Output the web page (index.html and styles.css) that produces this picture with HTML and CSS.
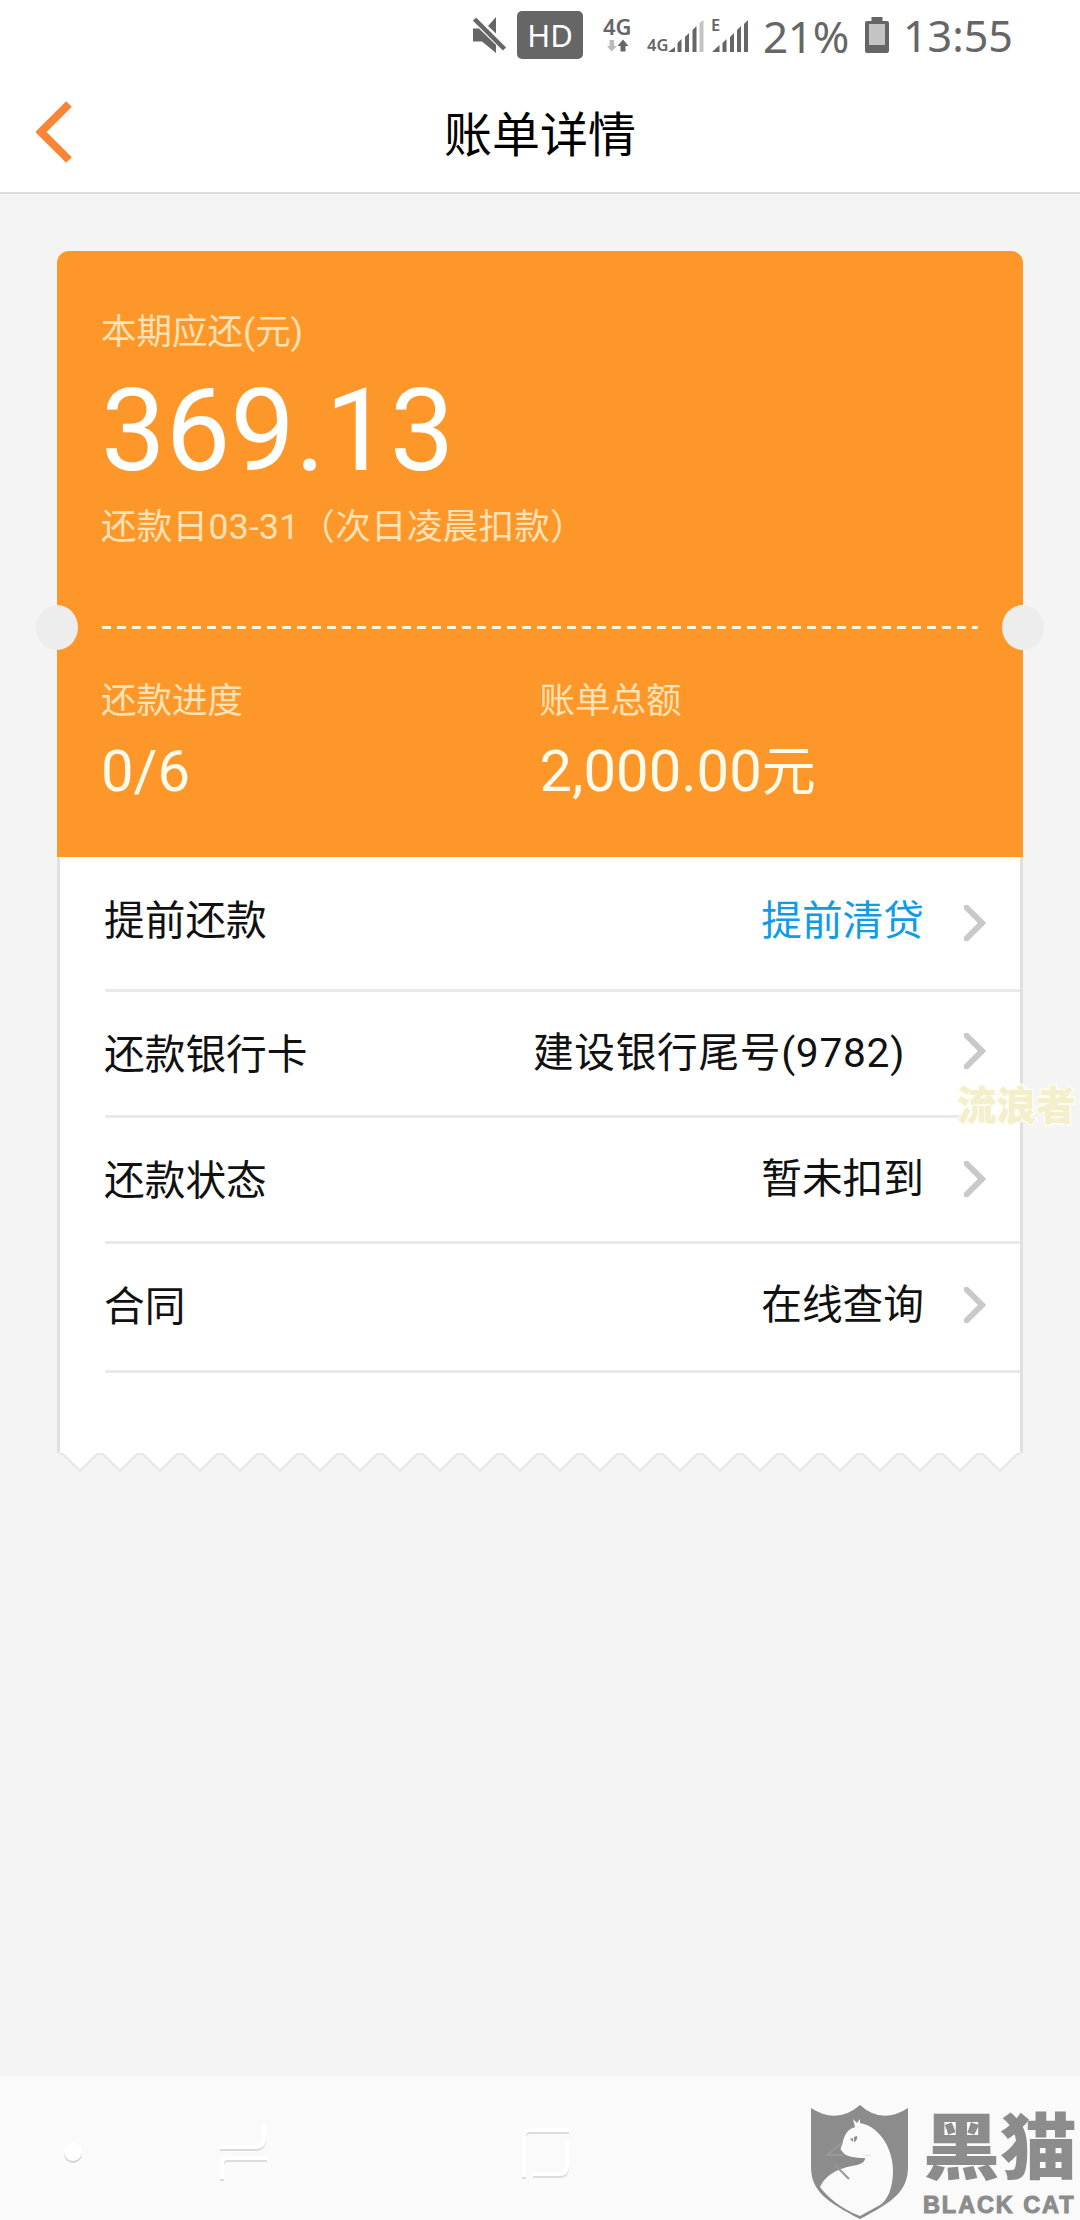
FILE: index.html
```html
<!DOCTYPE html>
<html lang="zh-CN">
<head>
<meta charset="utf-8">
<title>账单详情</title>
<link rel="stylesheet" href="styles.css">
</head>
<body>
<div class="status">
  <svg class="mute" width="34" height="38" viewBox="0 0 34 38"><path d="M15 10L23 1V17.500zM0 12.500H6L23 29V37L9 25.500H0z" fill="#666"/><path d="M1.500 3L31.500 33" stroke="#666" stroke-width="4.500"/></svg>
  <span class="hd">HD</span>
  <div class="net"><span class="net-label">4G</span>
    <svg width="22" height="13" viewBox="5 26 22 13"><path d="M7.500 27h4.500v6h3l-5.500 5.500L5 33h2.500z" fill="#bbb"/><path d="M18.500 38.500v-5.500h-3l5.500-6.500 5.500 6.500h-3v5.500z" fill="#666"/></svg>
  </div>
  <span class="sig-label sim1">4G</span>
  <svg class="sig" width="36" height="36" viewBox="21 0 36 36"><path d="M21 34l7-5v5zM30.500 34V25l4-4v13zM38 34V19l4-4v19zM45.500 34V12l4-4v26z" fill="#666"/><path d="M52.500 34V5l4-3v32z" fill="#c4c4c4"/></svg>
  <span class="sig-label sim2">E</span>
  <svg class="edge" width="37" height="36" viewBox="0 0 37 36"><path d="M0 34l7.500-7v7zM10.500 34V25l4-4v13zM18 34V19l4-4v19zM25 34V12l4-4v26zM32 34V6l4-4v32z" fill="#666"/></svg>
  <span class="pct">21%</span>
  <svg class="bat" width="24" height="36" viewBox="0 0 24 36"><path d="M6.500 0h11v4H22a2 2 0 0 1 2 2v28a2 2 0 0 1-2 2H2a2 2 0 0 1-2-2V6a2 2 0 0 1 2-2h4.500z" fill="#666"/><path d="M4 7h16v21H4z" fill="#c4c4c4"/></svg>
  <span class="clock">13:55</span>
</div>
<header class="bar">
  <svg class="back" width="38" height="62" viewBox="0 0 38 62"><path d="M33 3L5 31L33 59" fill="none" stroke="#fa8536" stroke-width="8"/></svg>
  <h1 class="title">账单详情</h1>
</header>
<main class="content">
  <section class="card">
    <div class="summary">
      <p class="label">本期应还(元)</p>
      <p class="amount">369.13</p>
      <p class="label due">还款日03-31（次日凌晨扣款）</p>
      <div class="tear"></div>
      <div class="stats">
        <div class="stat"><p class="label">还款进度</p><p class="value">0/6</p></div>
        <div class="stat"><p class="label">账单总额</p><p class="value">2,000.00<span class="unit">元</span></p></div>
      </div>
    </div>
    <div class="rows">
      <div class="row first"><span class="name">提前还款</span><span class="info link">提前清贷</span><svg class="chev" width="22" height="36" viewBox="0 0 22 36"><path d="M2.500 2.500L18 18L2.500 33.500"/></svg></div>
      <div class="row"><span class="name">还款银行卡</span><span class="info bank">建设银行尾号(9782)</span><svg class="chev bank-chev" width="22" height="36" viewBox="0 0 22 36"><path d="M2.500 2.500L18 18L2.500 33.500"/></svg></div>
      <div class="row"><span class="name">还款状态</span><span class="info">暂未扣到</span><svg class="chev" width="22" height="36" viewBox="0 0 22 36"><path d="M2.500 2.500L18 18L2.500 33.500"/></svg></div>
      <div class="row last"><span class="name">合同</span><span class="info">在线查询</span><svg class="chev" width="22" height="36" viewBox="0 0 22 36"><path d="M2.500 2.500L18 18L2.500 33.500"/></svg></div>
    </div>
    <svg class="zigzag" width="966" height="20" viewBox="0 0 966 20">
      <defs><pattern id="tooth" x="3" width="40" height="20" patternUnits="userSpaceOnUse"><path d="M0 0H40V1H37L20 18L3 1H0z" fill="#fff"/><path d="M0 1H3L20 18L37 1H40" fill="none" stroke="#e6e6e6" stroke-width="2"/></pattern></defs>
      <rect x="3" width="960" height="20" fill="url(#tooth)"/>
    </svg>
    <span class="nick">流浪者</span>
  </section>
</main>
<footer class="nav">
  <svg class="nav-icons" width="700" height="100" viewBox="0 0 700 100">
    <g transform="translate(0 2)" fill="none" stroke="#dcdcdc" stroke-width="4"><circle cx="73" cy="37" r="9" fill="#d2d2d2" stroke="none"/><path d="M264 10V22Q264 32 256 32H220M267 43H228Q222 43 222 49V64M569 15H530Q524 15 524 21V62M567 26V51Q567 59 559 59H533"/></g>
    <g fill="none" stroke="#fff" stroke-width="4"><circle cx="73" cy="37" r="9" fill="#fff" stroke="none"/><path d="M264 10V22Q264 32 256 32H220M267 43H228Q222 43 222 49V64M569 15H530Q524 15 524 21V62M567 26V51Q567 59 559 59H533"/></g>
  </svg>
  <div class="brand">
    <svg width="98" height="115" viewBox="0 0 98 115">
      <path d="M0 3Q26 20 49 0Q71 20 97 3V62C97 86 82 97 49 114C16 97 0 86 0 62Z" fill="#8c8c8c"/>
      <path d="M42 14L46 18L49 14V18C70 22 82 45 82 66C82 82 77 95 69 100L49 111C31 104 16 92 9 82C14 71 25 64 41 61C48 60 54 58 54 53C44 53 34 52 31 46C28 44 31 42 32 36C34 29 37 24 44 22Z" fill="#fafafa"/>
      <path d="M39 34l3-1v4zM43 32l3-1q1 4-3 6z" fill="#8c8c8c"/>
      <path d="M31 38L16 50H32M24 60L38 74" fill="none" stroke="#999" stroke-width="2"/>
      <path d="M54 50.500H60" stroke="#e4e4e4" stroke-width="1.500"/>
    </svg>
    <div class="brand-text"><span class="brand-cn">黑猫</span><span class="brand-en">BLACK CAT</span></div>
  </div>
</footer>
</body>
</html>
```

FILE: styles.css
```css
* { box-sizing: border-box; }
body { margin: 0; width: 1080px; height: 2220px; display: flex; flex-direction: column; overflow: hidden; background: #f4f4f4; color: #111; font-family: Roboto, "Noto Sans CJK SC", sans-serif; }
p, h1 { margin: 0; font-weight: 400; white-space: nowrap; }
svg { display: block; flex: none; }

.status { flex: none; height: 70px; display: flex; align-items: flex-start; padding-left: 473px; background: #fff; color: #666; font-family: "Noto Sans", sans-serif; white-space: nowrap; }
.mute { margin-top: 16px; }
.hd { width: 66px; height: 48px; margin: 11px 0 0 10px; border-radius: 5px; background: #666; color: #fff; font-size: 31px; line-height: 48px; text-align: center; }
.net { width: 34px; margin: 10px 0 0 20px; }
.net-label { display: block; font-size: 22px; line-height: 32px; height: 29px; font-weight: 600; }
.net svg { margin-left: 4px; }
.sig-label { font-size: 16.500px; line-height: 24px; font-weight: 600; }
.sim1 { width: 21px; margin: 33px 0 0 10px; }
.sig { margin: 18px 0 0; }
.sim2 { width: 10px; margin: 13px -10px 0 7px; }
.edge { margin: 18px 0 0 1px; }
.pct { margin-left: 14px; width: 91px; font-size: 44px; line-height: 72px; letter-spacing: -0.300px; }
.bat { margin: 17px 0 0 11px; }
.clock { margin-left: 14px; font-size: 43px; line-height: 72px; }

.bar { flex: none; height: 124px; display: flex; align-items: flex-start; background: #fff; border-bottom: 2px solid #dcdcdc; }
.back { margin: 31px 0 0 36px; }
.title { width: 932px; font-size: 48px; line-height: 70px; margin-top: 31px; text-align: center; color: #000; }

.content { flex: 1; padding: 57px 57px 0; }
.card { position: relative; }
.summary { height: 606px; padding: 56px 45px 0 44px; background: #fd972a; border-radius: 12px 12px 0 0; }
.label { font-size: 35.500px; line-height: 50px; color: #ffe2b4; }
.amount { font-size: 115px; line-height: 120px; margin-top: 14px; color: #fff; }
.due { margin-top: 11px; letter-spacing: 0.300px; }
.tear { position: relative; height: 3px; margin: 74px 0 0 1px; background: repeating-linear-gradient(90deg, #fff3dc 0 9px, transparent 9px 15px); }
.tear::before, .tear::after { content: ""; position: absolute; top: -21px; width: 42px; height: 45px; border-radius: 50%; background: #ededed; }
.tear::before { left: -66px; }
.tear::after { right: -66px; }
.stats { display: grid; grid-template-columns: 1fr 1fr; margin-top: 47px; }
.value { font-size: 58px; line-height: 70px; margin-top: 10px; color: #fffbea; }
.unit { font-size: 54px; }

.rows { background: #fff; border: solid #e0e0e0; border-width: 0 3px; padding: 0 0 80px 45px; }
.row { height: 126px; display: flex; align-items: center; border-bottom: 3px solid #e9e9e9; padding-right: 34px; font-size: 40.700px; line-height: 60px; }
.first { height: 135px; padding-bottom: 4px; }
.last { height: 129px; padding-bottom: 3px; }
.name { flex: 1; margin-left: -1px; padding-top: 3px; }
.first .name { padding-top: 0; }
.info { margin-right: 40px; padding-bottom: 2px; }
.first .info { padding-bottom: 0; }
.bank { margin-right: 59px; letter-spacing: 0.700px; }
.link { color: #109ce4; }
.chev { margin-bottom: 2px; fill: none; stroke: #c9c9c9; stroke-width: 6; stroke-linecap: round; }
.first .chev { margin: 3px 0 0; }
.bank-chev { margin-bottom: 6px; }
.nick { position: absolute; left: 900px; top: 826px; font-size: 39.500px; line-height: 60px; font-weight: 900; color: #f3eecb; -webkit-text-stroke: 3px #fffdf0; paint-order: stroke fill; white-space: nowrap; }

.nav { flex: none; height: 144px; display: flex; background: #fafafa; padding-top: 29px; }
.nav-icons { margin-top: 10px; }
.brand { display: flex; margin-left: 111px; }
.brand-text { display: flex; flex-direction: column; margin-left: 14px; color: #8c8c8c; white-space: nowrap; }
.brand-cn { font-size: 77px; line-height: 88px; height: 88px; font-weight: 900; transform: scaleY(0.930); }
.brand-en { font-family: "Liberation Sans", sans-serif; font-size: 23.500px; line-height: 24px; font-weight: 700; letter-spacing: 1.900px; -webkit-text-stroke: 1px #8c8c8c; }
```
